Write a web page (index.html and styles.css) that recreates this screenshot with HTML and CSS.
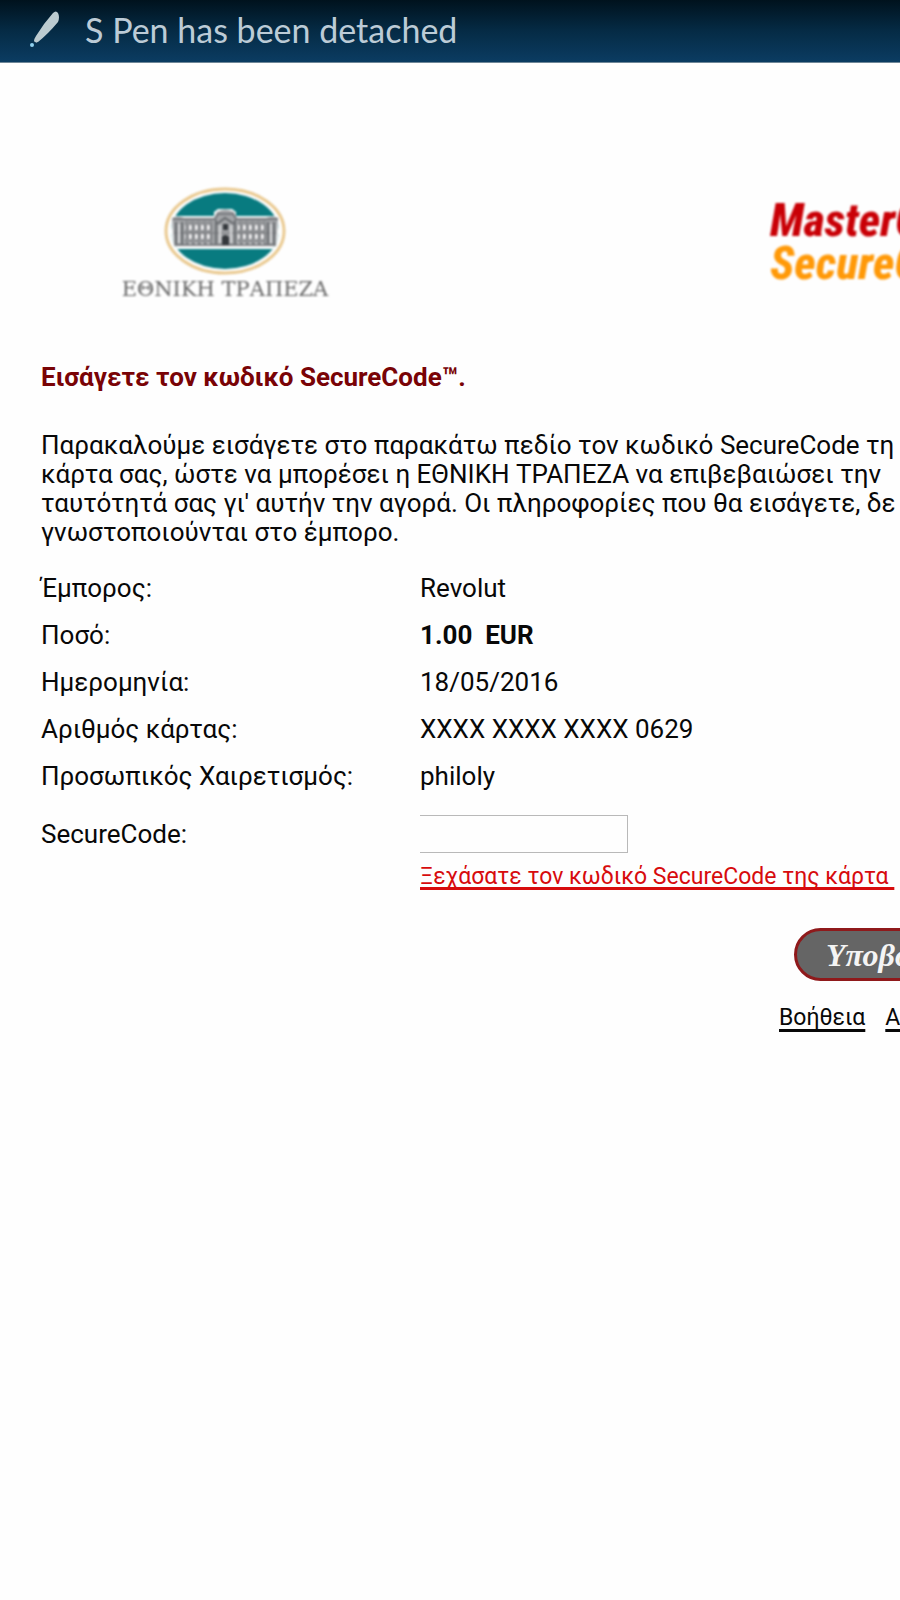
FILE: index.html
```
<!DOCTYPE html>
<html lang="el">
<head>
<meta charset="utf-8">
<meta name="viewport" content="width=device-width, initial-scale=1">
<title>SecureCode</title>
<link rel="stylesheet" href="styles.css">
</head>
<body>
<div class="status" role="status" lang="en">
  <svg class="pen" width="32" height="38" viewBox="0 0 32 38" aria-hidden="true">
    <path d="M23 2Q26-1 28 2Q30 6 28 11Q18 23 8 31Q5 32 4 30Q4 28 6 25Q14 12 23 2Z" fill="#bccbd0"/>
    <path d="M5 29L7 31" stroke="#bccbd0" stroke-width="2"/>
    <circle cx="2" cy="34" r="2" fill="#8fd0ee"/>
  </svg>
  <span>S Pen has been detached</span>
</div>
<main class="sheet">
  <header class="brands">
    <div class="bank">
      <svg class="bank-logo" width="122" height="88" viewBox="0 0 122 88" aria-hidden="true">
        <defs>
          <clipPath id="oval"><ellipse cx="61" cy="44" rx="54" ry="38"/></clipPath>
          <pattern id="windows" width="6" height="9" patternUnits="userSpaceOnUse">
            <rect width="6" height="9" fill="#939598"/>
            <rect x="1" y="2" width="3" height="5" fill="#eeeeef"/>
            <rect x="4" y="1" width="1" height="7" fill="#66696d"/>
          </pattern>
        </defs>
        <ellipse cx="61" cy="44" rx="59" ry="42" fill="#fff" stroke="#e9c88e" stroke-width="3"/>
        <g clip-path="url(#oval)">
          <rect width="122" height="88" fill="#087b80"/>
          <path d="M0 29H50V25L54 22H68L72 25V29H122V62H0Z" fill="#fff"/>
        </g>
        <path d="M8 31Q14 28 20 31H50L53 25Q61 20 70 25L73 31H102Q108 28 114 31L112 59H10Z" fill="#a3a5a8"/>
        <path d="M21 34H49V57H21ZM74 34H102V57H74Z" fill="url(#windows)"/>
        <path d="M9 32H51L54 27H69L72 32H114M11 58H112" fill="none" stroke="#77797d" stroke-width="2"/>
        <path d="M10 46H112" stroke="#77797d"/>
        <path d="M12 35V57M18 35V57M104 35V57M110 35V57M52 33V57M71 33V57" stroke="#696c70" stroke-width="2"/>
        <path d="M15 37V56M107 37V56M56 38V56M67 38V56" stroke="#d5d6d8" stroke-width="2"/>
        <path d="M53 37L61 31L70 37" fill="none" stroke="#66696d" stroke-width="2"/>
        <path d="M58 58V50Q61 46 65 50V58ZM59 37H64V43H59Z" fill="#34383c"/>
      </svg>
      <span class="bank-name">ΕΘΝΙΚΗ ΤΡΑΠΕΖΑ</span>
    </div>
    <div class="scheme" lang="en"><span class="scheme-top">MasterCard</span><span class="scheme-bottom">SecureCode</span></div>
  </header>
  <h1 class="title">Εισάγετε τον κωδικό SecureCode™.</h1>
  <p class="intro">Παρακαλούμε εισάγετε στο παρακάτω πεδίο τον κωδικό SecureCode τη<br>κάρτα σας, ώστε να μπορέσει η ΕΘΝΙΚΗ ΤΡΑΠΕΖΑ να επιβεβαιώσει την<br>ταυτότητά σας γι' αυτήν την αγορά. Οι πληροφορίες που θα εισάγετε, δε<br>γνωστοποιούνται στο έμπορο.</p>
  <form class="form">
    <dl class="details">
      <dt>Έμπορος:</dt><dd>Revolut</dd>
      <dt>Ποσό:</dt><dd><strong>1.00&nbsp; EUR</strong></dd>
      <dt>Ημερομηνία:</dt><dd>18/05/2016</dd>
      <dt>Αριθμός κάρτας:</dt><dd>XXXX XXXX XXXX 0629</dd>
      <dt>Προσωπικός Χαιρετισμός:</dt><dd>philoly</dd>
    </dl>
    <div class="code-row">
      <label for="code">SecureCode:</label>
      <input class="code" id="code" type="password">
    </div>
    <a class="forgot" href="#forgot">Ξεχάσατε τον κωδικό SecureCode της κάρτα&nbsp;</a>
    <button class="submit" type="submit">Υποβολή</button>
  </form>
  <nav class="links"><a href="#help">Βοήθεια</a><a href="#cancel">Ακύρωση</a></nav>
</main>
</body>
</html>
```
FILE: styles.css
```
* { box-sizing: border-box; }
body {
  margin: 0;
  min-height: 100vh;
  background: #fefefe;
  color: #080808;
  font: 26px/29px Roboto, "Noto Sans", sans-serif;
  overflow: hidden;
}
.status {
  display: flex;
  align-items: center;
  gap: 23px;
  height: 63px;
  padding: 0 30px 2px;
  background: linear-gradient(#00121d, #052b45 50%, #0b3c62);
  border-bottom: 1px solid #6f8798;
  color: #bccbd6;
  font: 34px/40px Lato, sans-serif;
}
.sheet { padding: 124px 0 0 41px; white-space: nowrap; overflow: hidden; }
.brands { display: grid; grid-template-columns: 729px 1fr; height: 175px; }
.bank {
  display: flex;
  flex-direction: column;
  align-items: center;
  width: 368px;
  filter: blur(1px);
}
.bank-name {
  margin-top: 3px;
  color: #666;
  font: 21px/22px "DejaVu Serif", serif;
}
.scheme {
  display: flex;
  flex-direction: column;
  padding-top: 12px;
  font: italic 800 46px/43px "Roboto Condensed", Lato, sans-serif;
  filter: blur(1px);
}
.scheme-top { color: #c90006; }
.scheme-bottom { color: #ff9908; }
.title { margin: 0 0 39px; color: #790306; font-size: 26px; line-height: 30px; }
.intro { margin: 0 0 18px; }
.details {
  display: grid;
  grid-template-columns: 379px 1fr;
  grid-auto-rows: 47px;
  align-items: center;
  margin: 0;
}
.details dd { margin: 0; }
.code-row { display: grid; grid-template-columns: 379px 1fr; align-items: center; margin-top: 15px; }
.code {
  width: 208px;
  height: 38px;
  border: 1px solid #b9b9b9;
  border-left: 0;
  background: #fefefe;
  font: inherit;
}
.forgot {
  display: block;
  width: max-content;
  margin: 9px 0 0 379px;
  color: #d70b0d;
  font-size: 23px;
  line-height: 30px;
  text-decoration-thickness: 3px;
  text-underline-offset: 3px;
  text-decoration-skip-ink: none;
}
.submit {
  display: block;
  width: 180px;
  height: 53px;
  margin: 36px 0 0 753px;
  border: 3px solid #8f191b;
  border-radius: 27px;
  background: #656565;
  color: #f4f4f4;
  font: italic bold 32px/40px "Liberation Serif", serif;
}
.links { display: flex; gap: 20px; margin: 22px 0 0 738px; font-size: 23px; line-height: 30px; }
.links a {
  color: #080808;
  text-decoration-thickness: 3px;
  text-underline-offset: 4px;
  text-decoration-skip-ink: none;
}
```
